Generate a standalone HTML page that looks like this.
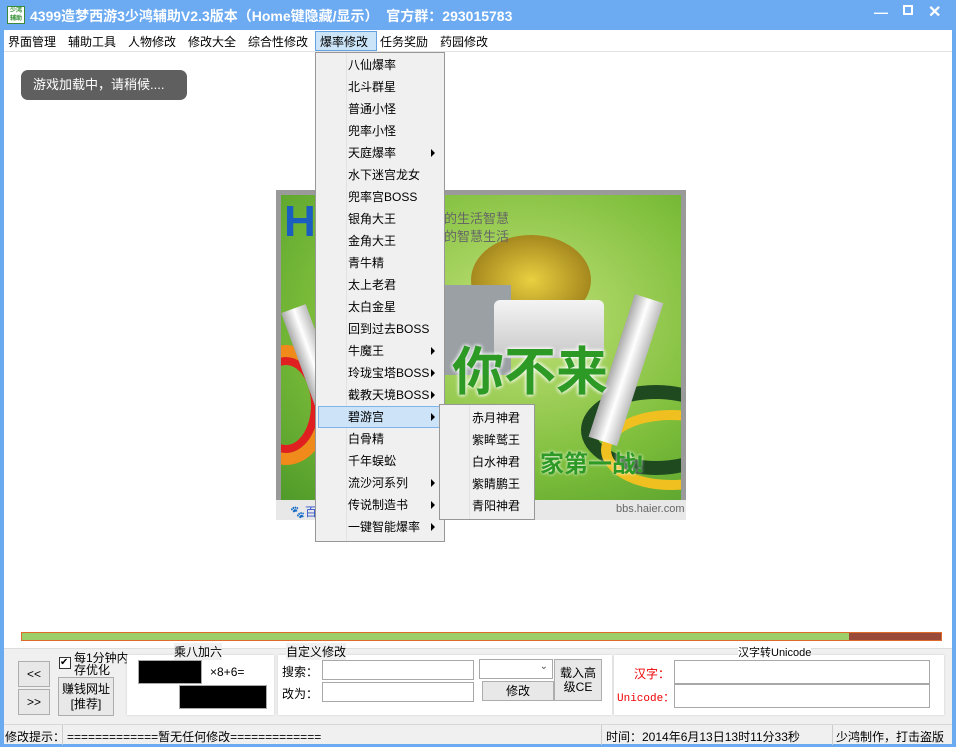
<!DOCTYPE html>
<html><head><meta charset="utf-8"><style>
*{margin:0;padding:0;box-sizing:border-box}
body{width:956px;height:747px;overflow:hidden;background:#6aaaf0;font-family:"Liberation Sans","Noto Sans CJK SC",sans-serif;font-size:12px;color:#000;position:relative}
.a{position:absolute}
.title{left:0;top:0;width:956px;height:30px;background:#6cabf2;color:#fff;font-weight:bold;font-size:14px}
.menubar{left:4px;top:30px;width:948px;height:22px;background:#fff;border-bottom:1px solid #e3e3e3}
.mi{position:absolute;top:3px;font-size:12px}
.content{left:4px;top:52px;width:948px;height:596px;background:#fff;overflow:hidden}
.bottom{left:4px;top:648px;width:948px;height:76px;background:#f0f0f0;border-top:1px solid #ddd}
.status{left:4px;top:724px;width:948px;height:20px;background:#f0f0f0;border-top:1px solid #d8d8d8}
.btn{position:absolute;background:#e8e8e8;border:1px solid #adadad;text-align:center}
.inp{position:absolute;background:#fff;border:1px solid #a8a8a8}
.grp{position:absolute;background:#fff;box-shadow:0 0 2px #ccc}
.menu{left:315px;top:52px;width:130px;height:490px;background:#f0f0f0;border:1px solid #979797}
.menu .it{position:absolute;left:32px;font-size:12px;line-height:22px;height:22px;width:95px}
.arr{position:absolute;right:8px;top:7px;width:0;height:0;border-left:4px solid #000;border-top:4px solid transparent;border-bottom:4px solid transparent}
</style></head><body>
<div class="a title">
 <div class="a" style="left:7px;top:6px;width:18px;height:18px;background:#fff;border:1px solid #3a8a3a;font-size:6px;color:#2a8a2a;line-height:8px;text-align:center">少鸿<br>辅助</div>
 <div class="a" style="left:30px;top:6px;white-space:nowrap">4399造梦西游3少鸿辅助V2.3版本（Home键隐藏/显示）&nbsp; 官方群：293015783</div>
 <div class="a" style="left:874px;top:4px;font-size:14px">—</div>
 <div class="a" style="left:903px;top:5px;width:10px;height:10px;border:2px solid #fff"></div>
 <div class="a" style="left:928px;top:2px;font-size:16px">✕</div>
</div>
<div class="a menubar">
 <span class="mi" style="left:4px">界面管理</span><span class="mi" style="left:64px">辅助工具</span><span class="mi" style="left:124px">人物修改</span><span class="mi" style="left:184px">修改大全</span><span class="mi" style="left:244px">综合性修改</span>
 <div class="a" style="left:311px;top:1px;width:62px;height:20px;background:#cce4f7;border:1px solid #62a2e4"></div>
 <span class="mi" style="left:316px">爆率修改</span><span class="mi" style="left:376px">任务奖励</span><span class="mi" style="left:436px">药园修改</span>
</div>
<div class="a content">
 <div class="a" style="left:17px;top:18px;width:166px;height:30px;background:#5f5f5f;border-radius:7px;color:#fff;font-size:13px;line-height:30px;padding-left:12px">游戏加载中，请稍候....</div>
 <div class="a" style="left:272px;top:138px;width:410px;height:330px;background:#9a9a9a"></div>
 <div class="a" style="left:277px;top:143px;width:400px;height:305px;overflow:hidden;background:radial-gradient(ellipse at 60% 40%,#c4e27a,#7cbd3a 60%,#4f9a2a)">
  <div class="a" style="left:-40px;top:150px;width:90px;height:120px;border-radius:50%;border:12px solid #f08a1a;box-shadow:inset 0 0 0 8px #e02020"></div>
  <div class="a" style="left:300px;top:190px;width:150px;height:90px;border-radius:50%;border:14px solid #1f4a20"></div>
  <div class="a" style="left:320px;top:215px;width:140px;height:80px;border-radius:50%;border:10px solid #f0c020"></div>
  <div class="a" style="left:190px;top:40px;width:120px;height:90px;border-radius:50%;background:radial-gradient(#e8d040,#8a6a10)"></div>
  <div class="a" style="left:160px;top:90px;width:70px;height:90px;background:#9aa0a4"></div>
  <div class="a" style="left:330px;top:100px;width:30px;height:150px;background:linear-gradient(90deg,#aaa,#fff,#bbb);transform:rotate(18deg)"></div>
  <div class="a" style="left:20px;top:110px;width:26px;height:120px;background:linear-gradient(90deg,#aaa,#fff,#bbb);transform:rotate(-20deg)"></div>
 </div>
 <div class="a" style="left:280px;top:145px;font-size:44px;font-weight:bold;color:#1a5fc0">H</div>
 <div class="a" style="left:440px;top:158px;color:#666;font-size:13px;line-height:18px">的生活智慧<br>的智慧生活</div>
 <div class="a" style="left:490px;top:248px;width:110px;height:58px;background:linear-gradient(#f4f4f4,#c8c8c8);border-radius:6px"></div>
 <div class="a" style="left:448px;top:278px;font-size:52px;font-weight:bold;color:#2e9a26;text-shadow:0 0 4px #fff,0 0 4px #fff">你不来</div>
 <div class="a" style="left:536px;top:392px;font-size:24px;font-weight:bold;color:#2e9a26;text-shadow:0 0 3px #fff">家第一战!</div>
 <div class="a" style="left:272px;top:448px;width:410px;height:20px;background:#e8e8e8"></div>
 <div class="a" style="left:286px;top:451px;color:#3355cc;font-size:12px">🐾百</div>
 <div class="a" style="left:612px;top:451px;color:#666;font-size:11px">bbs.haier.com</div>
 <div class="a" style="left:17px;top:580px;width:921px;height:9px;background:#9ccf6a;border:1px solid #e06a2a"></div>
 <div class="a" style="left:845px;top:581px;width:92px;height:7px;background:#9a4a38"></div>
</div>
<div class="a bottom">
 <div class="btn" style="left:14px;top:12px;width:32px;height:26px;line-height:24px">&lt;&lt;</div>
 <div class="btn" style="left:14px;top:40px;width:32px;height:26px;line-height:24px">&gt;&gt;</div>
 <div class="a" style="left:55px;top:8px;width:12px;height:12px;border:1px solid #333;background:#fff;font-size:10px;line-height:10px">✔</div>
 <div class="a" style="left:70px;top:3px;line-height:12px">每1分钟内<br>存优化</div>
 <div class="btn" style="left:54px;top:28px;width:56px;height:39px;line-height:15px;padding-top:4px">赚钱网址<br>[推荐]</div>
 <div class="grp" style="left:123px;top:6px;width:147px;height:60px"></div>
 <div class="a" style="left:170px;top:-6px;background:#f0f0f0">乘八加六</div>
 <div class="inp" style="left:134px;top:11px;width:64px;height:24px;background:#000"></div>
 <div class="a" style="left:206px;top:16px">×8+6=</div>
 <div class="inp" style="left:175px;top:36px;width:88px;height:24px;background:#000"></div>
 <div class="grp" style="left:274px;top:6px;width:334px;height:60px"></div>
 <div class="a" style="left:282px;top:-6px;background:#f0f0f0">自定义修改</div>
 <div class="a" style="left:278px;top:14px">搜索：</div>
 <div class="a" style="left:278px;top:36px">改为：</div>
 <div class="inp" style="left:318px;top:11px;width:152px;height:20px"></div>
 <div class="inp" style="left:318px;top:33px;width:152px;height:20px"></div>
 <div class="inp" style="left:475px;top:10px;width:74px;height:20px"><span style="position:absolute;right:4px;top:1px;font-size:10px;color:#555">⌄</span></div>
 <div class="btn" style="left:478px;top:32px;width:72px;height:20px;line-height:18px">修改</div>
 <div class="btn" style="left:550px;top:10px;width:48px;height:42px;line-height:14px;padding-top:6px">载入高<br>级CE</div>
 <div class="grp" style="left:610px;top:6px;width:330px;height:60px"></div>
 <div class="a" style="left:734px;top:-5px;background:#fff;font-size:11px">汉字转Unicode</div>
 <div class="a" style="left:630px;top:16px;color:#e00">汉字：</div>
 <div class="a" style="left:613px;top:40px;color:#e00;font-size:11px;font-family:'Liberation Mono',monospace">Unicode：</div>
 <div class="inp" style="left:670px;top:11px;width:256px;height:24px"></div>
 <div class="inp" style="left:670px;top:35px;width:256px;height:24px"></div>
</div>
<div class="a status">
 <div class="a" style="left:1px;top:3px">修改提示：</div>
 <div class="a" style="left:58px;top:0;width:1px;height:20px;background:#ccc"></div>
 <div class="a" style="left:63px;top:3px">=============暂无任何修改=============</div>
 <div class="a" style="left:597px;top:0;width:1px;height:20px;background:#ccc"></div>
 <div class="a" style="left:602px;top:3px">时间：2014年6月13日13时11分33秒</div>
 <div class="a" style="left:828px;top:0;width:1px;height:20px;background:#ccc"></div>
 <div class="a" style="left:832px;top:3px">少鸿制作，打击盗版</div>
</div>
<div class="a menu">
 <div class="a" style="left:30px;top:0;width:1px;height:488px;background:#e2e2e2"></div>
 <div class="a" style="left:2px;top:353px;width:122px;height:22px;background:#cde3f7;border:1px solid #7eb4ea"></div>
 <div class="it" style="top:1px">八仙爆率</div>
 <div class="it" style="top:23px">北斗群星</div>
 <div class="it" style="top:45px">普通小怪</div>
 <div class="it" style="top:67px">兜率小怪</div>
 <div class="it" style="top:89px">天庭爆率<i class="arr"></i></div>
 <div class="it" style="top:111px">水下迷宫龙女</div>
 <div class="it" style="top:133px">兜率宫BOSS</div>
 <div class="it" style="top:155px">银角大王</div>
 <div class="it" style="top:177px">金角大王</div>
 <div class="it" style="top:199px">青牛精</div>
 <div class="it" style="top:221px">太上老君</div>
 <div class="it" style="top:243px">太白金星</div>
 <div class="it" style="top:265px">回到过去BOSS</div>
 <div class="it" style="top:287px">牛魔王<i class="arr"></i></div>
 <div class="it" style="top:309px">玲珑宝塔BOSS<i class="arr"></i></div>
 <div class="it" style="top:331px">截教天境BOSS<i class="arr"></i></div>
 <div class="it" style="top:353px">碧游宫<i class="arr"></i></div>
 <div class="it" style="top:375px">白骨精</div>
 <div class="it" style="top:397px">千年蜈蚣</div>
 <div class="it" style="top:419px">流沙河系列<i class="arr"></i></div>
 <div class="it" style="top:441px">传说制造书<i class="arr"></i></div>
 <div class="it" style="top:463px">一键智能爆率<i class="arr"></i></div>
</div>
<div class="a menu" style="left:439px;top:404px;width:96px;height:116px">
 <div class="a" style="left:29px;top:0;width:1px;height:114px;background:#e2e2e2"></div>
 <div class="it" style="top:2px">赤月神君</div>
 <div class="it" style="top:24px">紫眸鹫王</div>
 <div class="it" style="top:46px">白水神君</div>
 <div class="it" style="top:68px">紫睛鹏王</div>
 <div class="it" style="top:90px">青阳神君</div>
</div>
</body></html>
